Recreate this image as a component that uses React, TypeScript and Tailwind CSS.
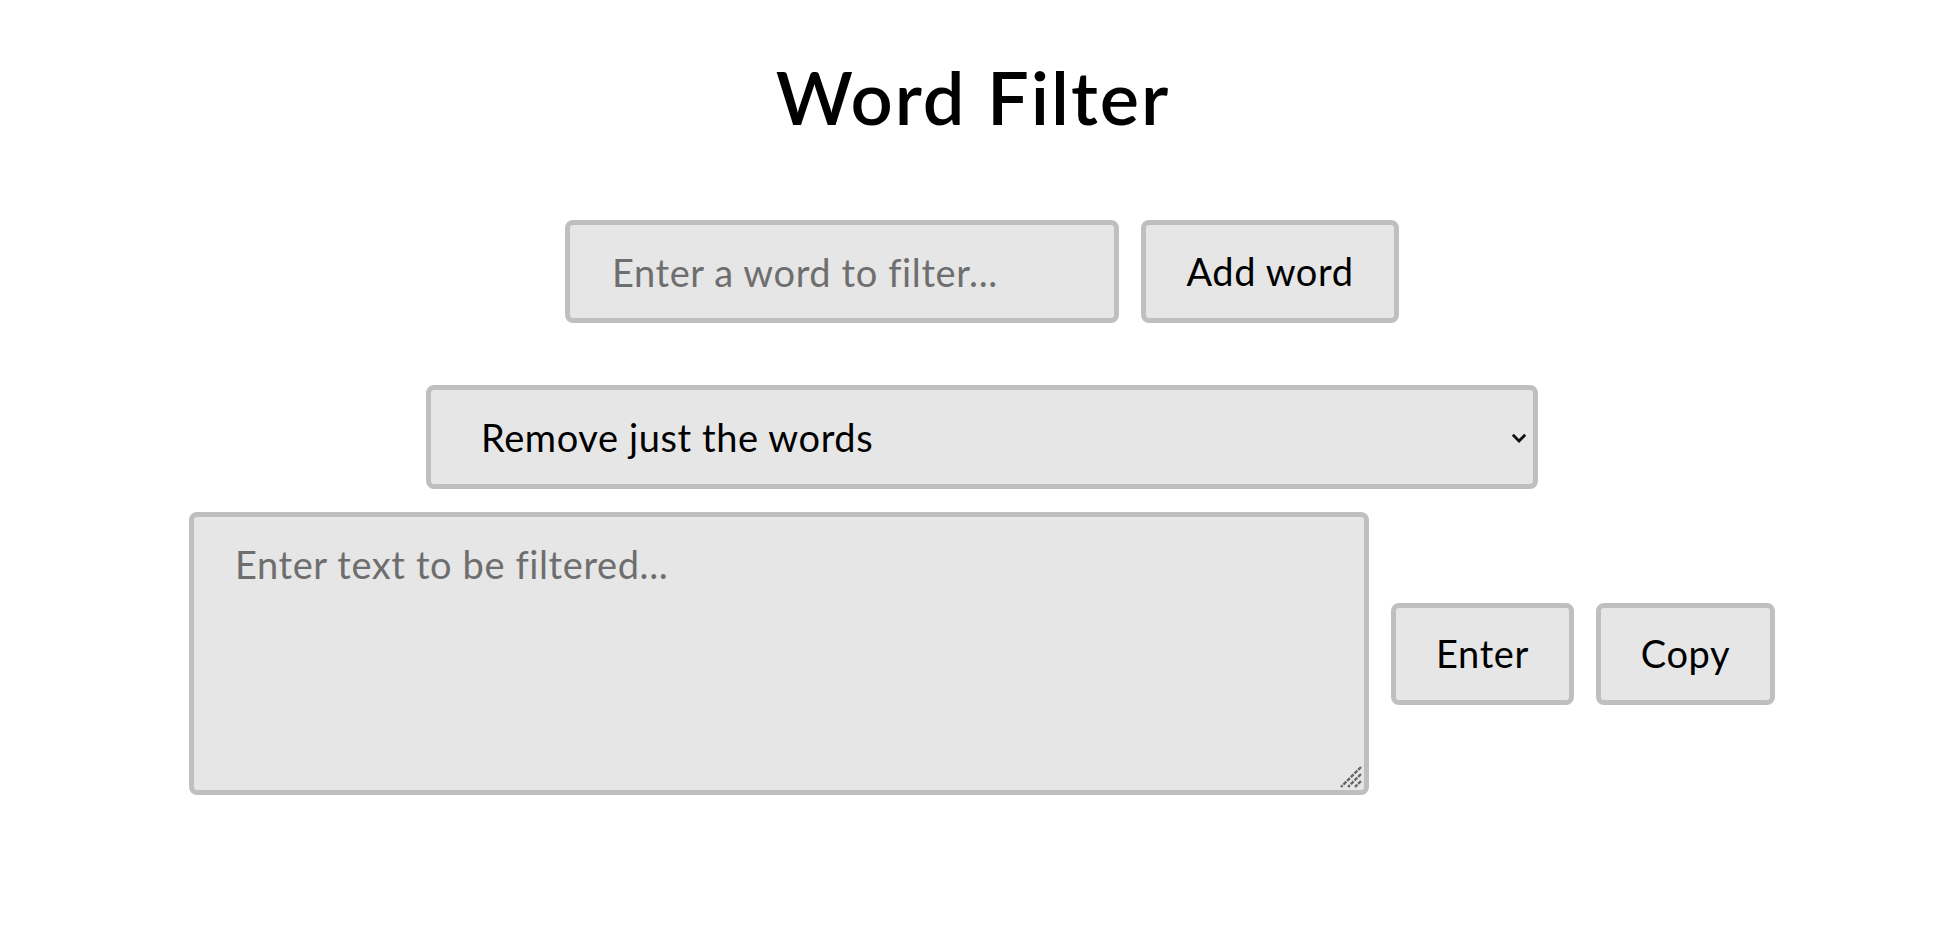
import React, { useState } from 'react';

const boxCls = 'bg-[#e6e6e6] border-[5px] border-[#bfbfbf] rounded-[8px] outline-none';

export default function App() {
  const [word, setWord] = useState('');
  const [text, setText] = useState('');
  const [mode, setMode] = useState('words');

  return (
    <div
      className="min-h-screen bg-white text-black flex flex-col items-center"
      style={{ fontFamily: 'Lato, "Noto Sans", sans-serif' }}
    >
      {/* Title */}
      <h1 className="mt-[52px] pl-[10px] text-[74px] font-semibold leading-[90px] tracking-[2px]">Word Filter</h1>

      <div className="flex flex-col items-center pl-[28px] text-[38px] tracking-[0.6px]">
        {/* Word input */}
        <div className="mt-[78px] flex items-center gap-[22px]">
          <input
            value={word}
            onChange={(e) => setWord(e.target.value)}
            placeholder="Enter a word to filter..."
            className={`w-[554px] h-[103px] px-[42px] ${boxCls} placeholder:text-[#6e6e6e]`}
          />
          <button className={`w-[258px] h-[103px] ${boxCls}`}>Add word</button>
        </div>

        {/* Mode */}
        <div className="relative mt-[62px]">
          <select
            value={mode}
            onChange={(e) => setMode(e.target.value)}
            className={`appearance-none w-[1112px] h-[104px] pl-[50px] pr-[40px] ${boxCls}`}
          >
            <option value="words">Remove just the words</option>
            <option value="sentences">Remove the whole sentence</option>
          </select>
          <svg
            className="absolute right-[11px] top-[48px] pointer-events-none"
            width="16"
            height="10"
            viewBox="0 0 16 10"
            fill="none"
          >
            <polyline points="1.8,1.8 8,8 14.2,1.8" stroke="#111" strokeWidth="2.8" />
          </svg>
        </div>

        {/* Text + actions */}
        <div className="mt-[23px] flex items-center gap-[22px]">
          <div className="relative">
            <textarea
              value={text}
              onChange={(e) => setText(e.target.value)}
              placeholder="Enter text to be filtered..."
              className={`block resize-none w-[1180px] h-[283px] px-[41px] py-[19px] ${boxCls} placeholder:text-[#6e6e6e]`}
            />
            <svg
              className="absolute right-[7px] bottom-[7px] pointer-events-none"
              width="22"
              height="22"
              viewBox="0 0 22 22"
              fill="none"
              stroke="#666"
              strokeWidth="2.4"
              strokeDasharray="4 1.2"
            >
              <line x1="21" y1="1" x2="1" y2="21" />
              <line x1="21" y1="8" x2="8" y2="21" />
              <line x1="21" y1="15" x2="15" y2="21" />
            </svg>
          </div>
          <button className={`w-[183px] h-[102px] ${boxCls}`}>Enter</button>
          <button className={`w-[179px] h-[102px] ${boxCls}`}>Copy</button>
        </div>
      </div>
    </div>
  );
}
